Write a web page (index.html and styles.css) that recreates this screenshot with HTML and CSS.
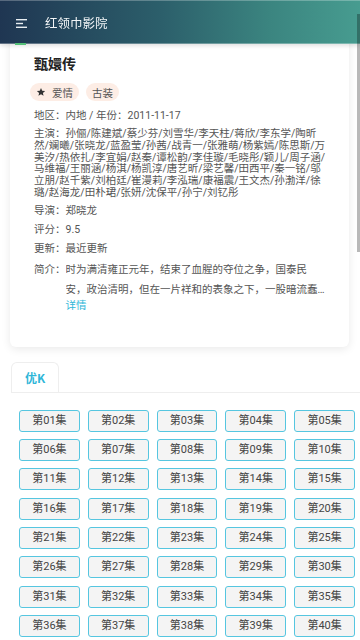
FILE: index.html
```html
<!DOCTYPE html>
<html lang="zh">
<head>
<meta charset="utf-8">
<meta name="viewport" content="width=device-width, initial-scale=1">
<title>红领巾影院</title>
<link rel="stylesheet" href="styles.css">
</head>
<body>
<header class="appbar">
  <button class="menu-btn" aria-label="menu">
    <svg class="menu-icon" width="11" height="9" viewBox="0 0 11 9"><rect x="0" y="0" width="11" height="1.4" fill="#e8eef2"/><rect x="0" y="3.8" width="7" height="1.4" fill="#e8eef2"/><rect x="0" y="7.6" width="11" height="1.4" fill="#e8eef2"/></svg>
    <span class="menu-indicator"></span>
  </button>
  <h1 class="appbar-title">红领巾影院</h1>
</header>
<div class="scrollbar"></div>
<main class="page">
  <section class="card">
    <h2 class="movie-title">甄嬛传</h2>
    <div class="tags">
      <span class="tag"><svg class="star" width="10" height="10" viewBox="0 0 24 24"><path d="M12 2.5l2.9 6.4 7 .7-5.3 4.7 1.5 6.9L12 17.6l-6.1 3.6 1.5-6.9L2.1 9.6l7-.7z" fill="#333"/></svg>爱情</span>
      <span class="tag">古装</span>
    </div>
    <p class="info">地区：内地 / 年份：2011-11-17</p>
    <p class="info cast">主演：孙俪/陈建斌/蔡少芬/刘雪华/李天柱/蒋欣/李东学/陶昕然/斓曦/张晓龙/蓝盈莹/孙茜/战青一/张雅萌/杨紫嫣/陈思斯/万美汐/热依扎/李宜娟/赵秦/谭松韵/李佳璇/毛晓彤/颖儿/周子涵/马维福/王丽涵/杨淇/杨凯淳/唐艺昕/梁艺馨/田西平/秦一铭/邬立朋/赵千紫/刘柏廷/崔漫莉/李泓瑞/康福震/王文杰/孙渤洋/徐璐/赵海龙/田朴珺/张妍/沈保平/孙宁/刘钇彤</p>
    <p class="info">导演：郑晓龙</p>
    <p class="info">评分：9.5</p>
    <p class="info">更新：最近更新</p>
    <div class="intro">
      <span class="intro-label">简介：</span>
      <div class="intro-body">
        <p class="intro-text">时为满清雍正元年，结束了血腥的夺位之争，国泰民安，政治清明，但在一片祥和的表象之下，一股暗流蠢蠢欲动。尤其后宫，华妃的势力虽然依然如日中天，但皇后和其他妃嫔也都在暗中积蓄力量。</p>
        <a class="more" href="#">详情</a>
      </div>
    </div>
  </section>

  <nav class="tabs">
    <div class="tab active">优K</div>
  </nav>

  <div class="episodes">
    <button class="ep">第01集</button><button class="ep">第02集</button><button class="ep">第03集</button><button class="ep">第04集</button><button class="ep">第05集</button>
    <button class="ep">第06集</button><button class="ep">第07集</button><button class="ep">第08集</button><button class="ep">第09集</button><button class="ep">第10集</button>
    <button class="ep">第11集</button><button class="ep">第12集</button><button class="ep">第13集</button><button class="ep">第14集</button><button class="ep">第15集</button>
    <button class="ep">第16集</button><button class="ep">第17集</button><button class="ep">第18集</button><button class="ep">第19集</button><button class="ep">第20集</button>
    <button class="ep">第21集</button><button class="ep">第22集</button><button class="ep">第23集</button><button class="ep">第24集</button><button class="ep">第25集</button>
    <button class="ep">第26集</button><button class="ep">第27集</button><button class="ep">第28集</button><button class="ep">第29集</button><button class="ep">第30集</button>
    <button class="ep">第31集</button><button class="ep">第32集</button><button class="ep">第33集</button><button class="ep">第34集</button><button class="ep">第35集</button>
    <button class="ep">第36集</button><button class="ep">第37集</button><button class="ep">第38集</button><button class="ep">第39集</button><button class="ep">第40集</button>
  </div>
</main>
</body>
</html>
```
FILE: styles.css
```css
* { box-sizing: border-box; }
html, body { margin: 0; padding: 0; }
body {
  background: #fff;
  font-family: Roboto, "Noto Sans CJK SC", sans-serif;
  color: #444;
  overflow: hidden;
  height: 640px;
}

.appbar {
  position: fixed;
  top: 0; left: 0; right: 0;
  height: 44px;
  z-index: 10;
  display: flex;
  align-items: center;
  background: linear-gradient(90deg, #1f3652 0%, #2c5f6b 45%, #3b8580 75%, #479c90 100%);
  border-top: 1px solid rgba(255,255,255,0.25);
  border-bottom: 1px solid rgba(255,255,255,0.3);
  box-shadow: 0 2px 4px rgba(0,0,0,0.12);
}
.menu-btn {
  position: relative;
  width: 42px;
  height: 42px;
  padding: 0 0 0 16px;
  margin: 0;
  border: 0;
  background: none;
  display: flex;
  align-items: center;
}
.menu-icon { display: block; margin-top: 2px; }
.menu-indicator {
  position: absolute;
  left: 15px;
  bottom: -2px;
  width: 11px;
  height: 2px;
  background: #55c078;
}
.appbar-title {
  margin: 0 0 0 3px;
  font-size: 12.5px;
  font-weight: 400;
  color: #f2f5f7;
  font-family: "Noto Sans CJK SC", sans-serif;
}

.scrollbar {
  position: fixed;
  top: 14px;
  right: 0;
  width: 3.5px;
  height: 238px;
  background: rgba(0,0,0,0.28);
  z-index: 20;
}

.page { padding-top: 30px; }

.card {
  margin: 0 11px 0 10px;
  background: #fff;
  border-radius: 6px;
  box-shadow: 0 2px 10px rgba(0,0,0,0.09);
  padding: 23px 22px 35px 24px;
}
.movie-title {
  margin: 0;
  font-size: 14px;
  line-height: 20px;
  font-weight: 700;
  color: #222;
  font-family: "Noto Sans CJK SC", sans-serif;
}
.tags {
  display: flex;
  gap: 7px;
  margin: 10px 0 0 -4px;
}
.tag {
  display: inline-flex;
  align-items: center;
  gap: 6px;
  height: 18px;
  padding: 0 6px;
  border-radius: 9px;
  background: #fdede5;
  color: #555;
  font-size: 10.5px;
  font-family: "Noto Sans CJK SC", sans-serif;
}
.star { display: block; }

.info {
  margin: 3px 0 0;
  font-size: 10.5px;
  line-height: 16px;
  color: #555;
  word-break: break-all;
}
.tags + .info { margin-top: 7px; }
.cast {
  line-height: 11.8px;
  margin-top: 4px;
  margin-bottom: 4px;
}

.intro {
  display: flex;
  margin-top: 3px;
  font-size: 10.5px;
  color: #555;
}
.intro-label { line-height: 20px; flex: none; }
.intro-body { flex: 1; min-width: 0; }
.intro-text {
  margin: 0;
  line-height: 20px;
  display: -webkit-box;
  -webkit-line-clamp: 2;
  -webkit-box-orient: vertical;
  overflow: hidden;
}
.more {
  display: block;
  line-height: 12px;
  color: #2fb6d8;
  text-decoration: none;
}

.tabs {
  margin-top: 15px;
  padding-left: 11px;
  display: flex;
  border-bottom: 1px solid #eee;
  margin-left: 11px;
  padding-left: 0;
}
.tab {
  width: 48px;
  height: 30px;
  border: 1px solid #eee;
  border-bottom: 0;
  border-radius: 6px 6px 0 0;
  display: flex;
  align-items: center;
  justify-content: center;
  font-size: 12px;
  font-weight: 700;
  color: #2fb6d8;
  font-family: "Noto Sans CJK SC", sans-serif;
  background: #fff;
}

.episodes {
  display: grid;
  grid-template-columns: repeat(5, 1fr);
  column-gap: 8px;
  row-gap: 7.3px;
  padding: 17px 5px 0 19px;
}
.ep {
  height: 22px;
  margin: 0;
  padding: 0;
  border: 1px solid #56c6e0;
  border-radius: 3px;
  background: #f4f4f4;
  color: #444;
  font-size: 11px;
  font-family: Roboto, "Noto Sans CJK SC", sans-serif;
  line-height: 20px;
}
```
